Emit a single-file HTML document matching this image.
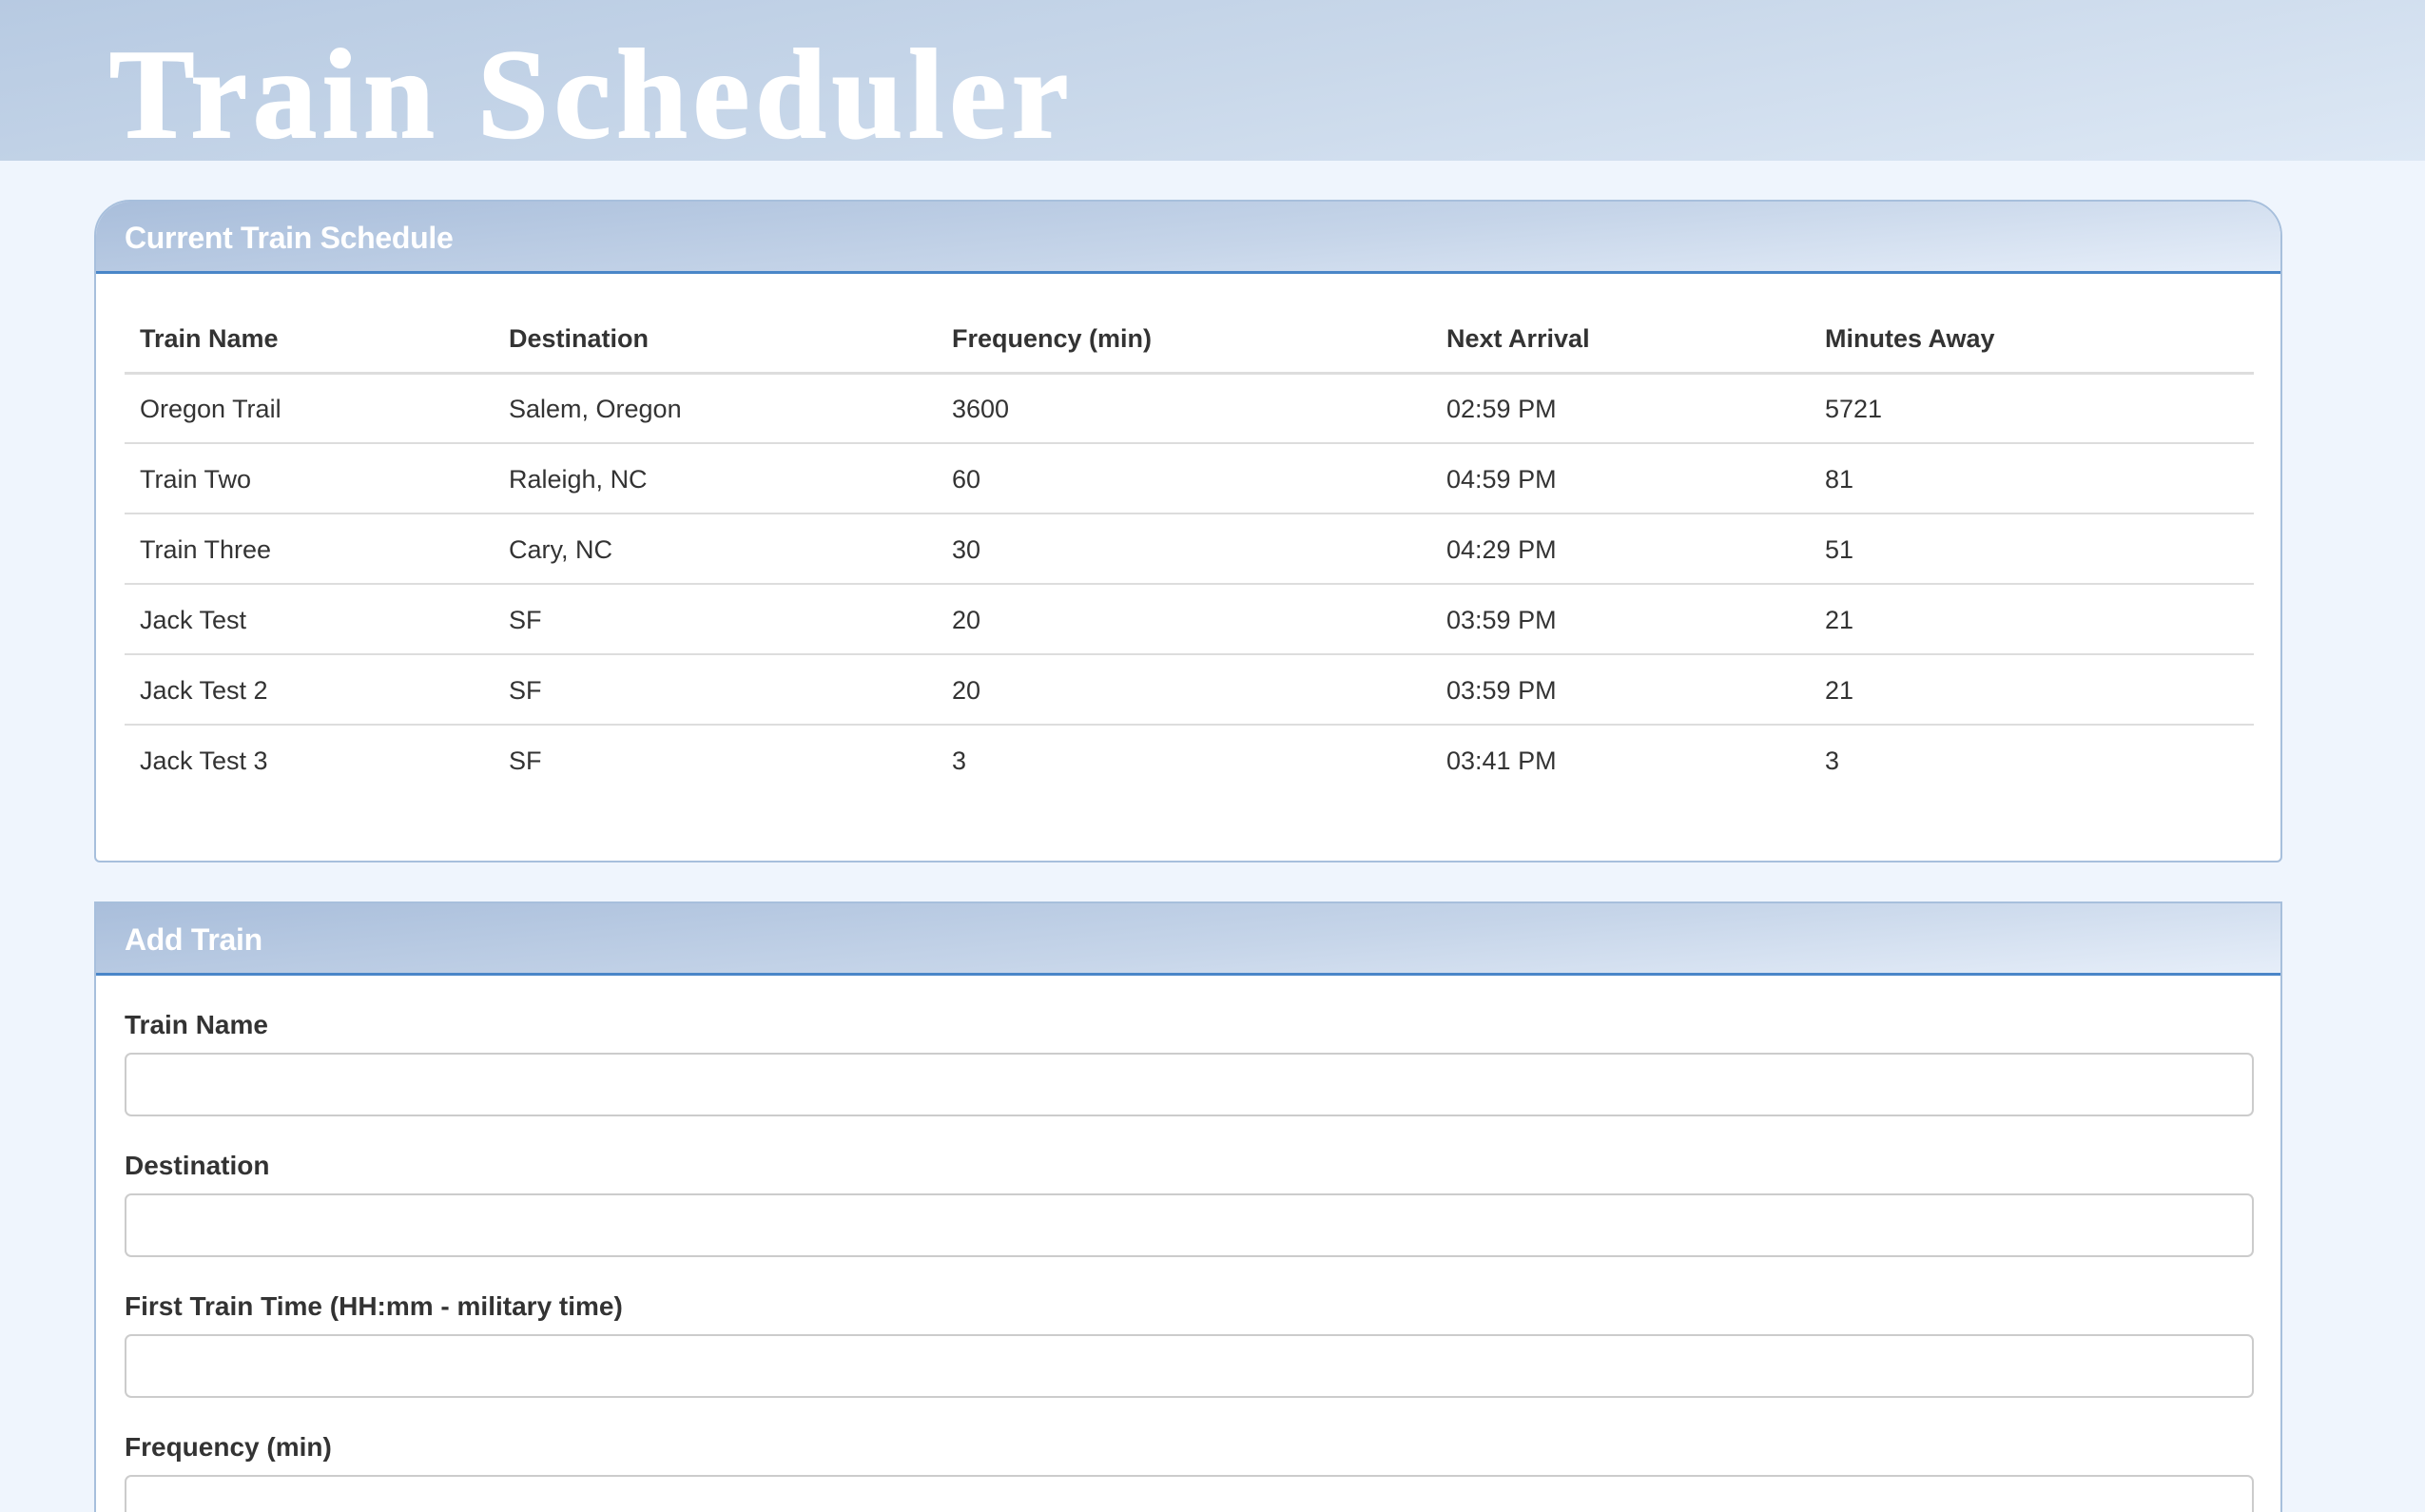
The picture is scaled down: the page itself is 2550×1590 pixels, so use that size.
<!DOCTYPE html>
<html><head><meta charset="utf-8"><style>
*{box-sizing:border-box;margin:0;padding:0}
html{width:2550px;height:1590px;overflow:hidden}
body{width:2550px;height:1590px;overflow:hidden;background:#eff5fd;font-family:"Liberation Sans",Arial,sans-serif;position:relative}
.hdr{position:absolute;left:0;top:0;width:2550px;height:169px;background:linear-gradient(170deg,#b7cae2 0%,#c9d8ea 50%,#dde8f5 100%)}
.hdr h1{position:absolute;left:115px;top:24px;font-family:"Liberation Serif",serif;font-weight:bold;font-size:134px;line-height:150px;color:#fff;letter-spacing:6px;white-space:nowrap;-webkit-text-stroke:2px #fff}
.panel{position:absolute;left:99px;width:2301px;background:#fff;border:2px solid #a7bfdc}
.ph{position:absolute;left:0;top:0;right:0;height:76px;background:linear-gradient(175deg,#a9bedb 0%,#c6d5e9 55%,#e6eef9 100%);border-bottom:3px solid #4a86c8}
.ph span{position:absolute;left:30px;top:20px;color:#fff;font-weight:bold;font-size:32px;letter-spacing:-0.3px}
table{position:absolute;left:30px;top:110px;width:2239px;border-collapse:collapse;font-size:27px;color:#333}
th{text-align:left;font-weight:bold;height:70px;border-bottom:3px solid #ddd;padding-left:16px;vertical-align:middle}
td{height:74px;padding-left:16px;border-top:2px solid #ddd;padding-top:2px}
tr.f td{border-top:none}
label{position:absolute;left:30px;font-weight:bold;font-size:28px;color:#333}
.in{position:absolute;left:30px;width:2239px;height:67px;border:2px solid #ccc;border-radius:7px;background:#fff}
</style></head><body>
<div class="hdr"><h1>Train Scheduler</h1></div>
<div class="panel" style="top:210px;height:697px;border-radius:38px 38px 6px 6px;overflow:hidden">
<div class="ph"><span>Current Train Schedule</span></div>
<table>
<tr><th style="width:388px">Train Name</th><th style="width:466px">Destination</th><th style="width:520px">Frequency (min)</th><th style="width:398px">Next Arrival</th><th>Minutes Away</th></tr>
<tr class="f"><td>Oregon Trail</td><td>Salem, Oregon</td><td>3600</td><td>02:59 PM</td><td>5721</td></tr>
<tr><td>Train Two</td><td>Raleigh, NC</td><td>60</td><td>04:59 PM</td><td>81</td></tr>
<tr><td>Train Three</td><td>Cary, NC</td><td>30</td><td>04:29 PM</td><td>51</td></tr>
<tr><td>Jack Test</td><td>SF</td><td>20</td><td>03:59 PM</td><td>21</td></tr>
<tr><td>Jack Test 2</td><td>SF</td><td>20</td><td>03:59 PM</td><td>21</td></tr>
<tr><td>Jack Test 3</td><td>SF</td><td>3</td><td>03:41 PM</td><td>3</td></tr>
</table>
</div>
<div class="panel" style="top:948px;height:660px;border-bottom:none">
<div class="ph"><span>Add Train</span></div>
<label style="top:112px">Train Name</label>
<div class="in" style="top:157px"></div>
<label style="top:260px">Destination</label>
<div class="in" style="top:305px"></div>
<label style="top:408px">First Train Time (HH:mm - military time)</label>
<div class="in" style="top:453px"></div>
<label style="top:556px">Frequency (min)</label>
<div class="in" style="top:601px"></div>
</div>
</body></html>
